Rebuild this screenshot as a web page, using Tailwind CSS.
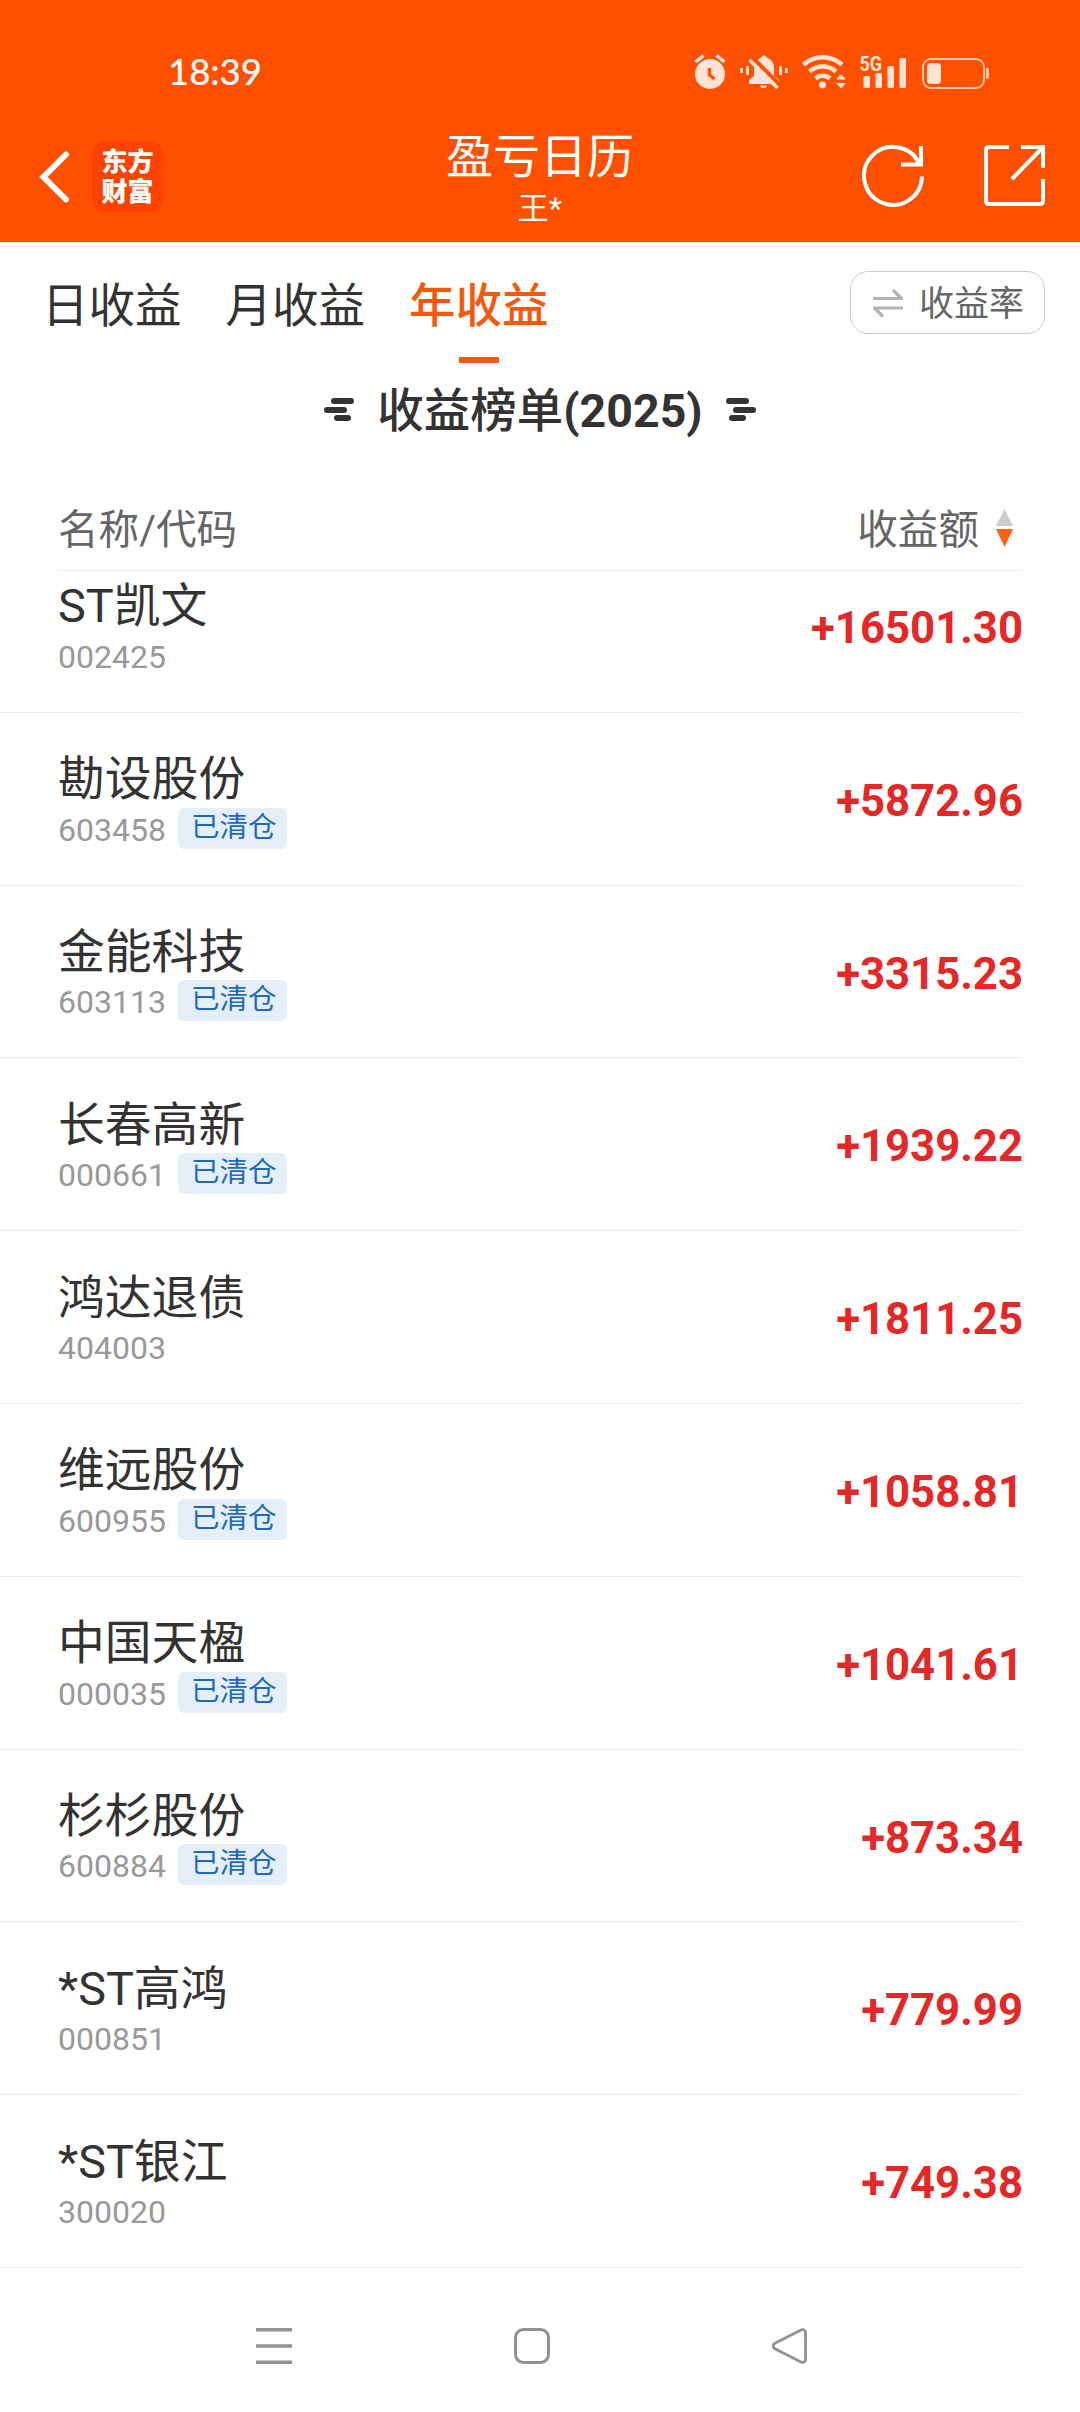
<!DOCTYPE html>
<html lang="zh-CN">
<head>
  <meta charset="UTF-8" />
  <meta name="viewport" content="width=device-width, initial-scale=1.0" />
  <title>盈亏日历</title>
  <script src="https://cdn.jsdelivr.net/npm/@tailwindcss/browser@4"></script>
  <style>
    body {
      font-family: Roboto, 'Noto Sans CJK SC', sans-serif;
    }
  </style>
</head>
<body class="bg-white text-[#333] w-[1080px] h-[2412px] overflow-hidden flex flex-col">

  <!-- Header -->
  <header class="bg-[#ff5000] text-white h-[242px] shrink-0">
    <!-- Status bar -->
    <div class="h-[130px] pl-[168px] pr-[90px] pt-[12px] flex items-center justify-between">
      <span class="text-[36.5px] leading-none font-medium font-['Lato']">18:39</span>
      <svg class="w-[296px] h-[52px]" viewBox="0 -9 296 52" fill="#ffe4d6">
        <!-- alarm -->
        <circle cx="16" cy="20" r="15" />
        <path d="M1.500 8l8-6.500M30.500 8l-8-6.500" stroke="#ffe4d6" stroke-width="3.500" />
        <path d="M15.500 14v7l5 4" stroke="#ff5000" stroke-width="3.500" fill="none" />
        <!-- muted bell -->
        <path d="M55 30v-4l5-4v-8c0-6 3-9 7.500-10.500 1-3 4-3 5 0C77 5 80 8 80 14v8l5 4v4z" />
        <path d="M66 31.500h7c-1 3.500-6 3.500-7 0z" />
        <path d="M58.500 3.500l30 30" stroke="#ff5000" stroke-width="4" />
        <path d="M55.500 6l28 28" stroke="#ffe4d6" stroke-width="3.500" />
        <path d="M47.500 14v5M53.500 12v9M86.500 12v9M92.500 14v5" stroke="#ffe4d6" stroke-width="2.800" />
        <!-- wifi -->
        <g fill="none" stroke="#ffe4d6" stroke-width="4.500">
          <path d="M109.500 10.500a29 29 0 0 1 38.500 0" />
          <path d="M115.500 17.500a20 20 0 0 1 26.500 0" />
          <path d="M121.500 24.500a11 11 0 0 1 14.500 0" />
        </g>
        <circle cx="128.500" cy="31" r="3.400" />
        <path d="M142 25.500l5-5.500 5 5.500zM142 29l5 5.500 5-5.500z" />
        <!-- signal -->
        <rect x="169.500" y="22" width="6.500" height="12" rx="1.500" />
        <rect x="181.500" y="19" width="6.500" height="15" rx="1.500" />
        <rect x="193.500" y="12" width="6.500" height="22" rx="1.500" />
        <rect x="205.500" y="4" width="6.500" height="30" rx="1.500" />
        <text x="165.500" y="16.500" font-family="Roboto" font-size="20" font-weight="700" textLength="22.500" lengthAdjust="spacingAndGlyphs">5G</text>
        <!-- battery -->
        <rect x="229" y="5" width="61" height="29" rx="8" fill="none" stroke="#ffc8a6" stroke-width="2" />
        <rect x="233" y="9" width="14" height="21" rx="4" />
        <path d="M292 14h1q2 0 2 2v7q0 2-2 2h-1z" fill="#ffc8a6" />
      </svg>
    </div>

    <!-- Title bar -->
    <div class="h-[112px] px-[34px] grid grid-cols-3">
      <div class="flex items-start pt-[11px]">
        <svg class="w-[40px] h-[71px]" viewBox="0 0 40 71" fill="none" stroke="#fff" stroke-width="6" stroke-linecap="round">
          <path d="M32 13.500L9.500 36 32 58.500" />
        </svg>
        <div class="ml-[18px] w-[71px] h-[71px] rounded-[14px] bg-[#ff4200] flex flex-col items-center justify-center text-[26px] leading-[30px] font-black">
          <span>东方</span>
          <span>财富</span>
        </div>
      </div>
      <div class="flex flex-col items-center">
        <h1 class="text-[47px] leading-[54px]">盈亏日历</h1>
        <p class="text-[31px] leading-[50px]">王*</p>
      </div>
      <div class="flex items-start justify-end gap-[59px] pt-[13px]">
        <svg class="w-[64px] h-[64px]" viewBox="0 0 64 64" fill="none" stroke="#fff" stroke-width="4">
          <path d="M61 33.500A29 29 0 1 1 58 20" />
          <path d="M60 3v18.500H40" />
        </svg>
        <svg class="w-[62px] h-[64px]" viewBox="0 0 62 64" fill="none" stroke="#fff" stroke-width="4">
          <path d="M25 4H5q-3 0-3 3v51q0 3 3 3h51q3 0 3-3V36" />
          <path d="M37 4h22v21M59 4L28 36" />
        </svg>
      </div>
    </div>
  </header>

  <!-- Tabs -->
  <nav class="h-[123px] shrink-0 pl-[42px] pr-[35px] flex items-start justify-between">
    <div class="flex gap-[44px] pt-[29px] text-[46.5px] leading-[70px]">
      <span>日收益</span>
      <span>月收益</span>
      <span class="flex flex-col items-center font-medium text-[#f4590c]">
        年收益
        <i class="mt-[16px] w-[40px] h-[6px] bg-[#f05a14]"></i>
      </span>
    </div>
    <button class="mt-[29px] w-[195px] h-[63px] rounded-[18px] border border-[#ccc] text-[#666] text-[35px] leading-none flex items-center pl-[22px]">
      <svg class="w-[30px] h-[28px] mr-[16px]" viewBox="0 0 30 28" fill="none" stroke="#b3b3b3" stroke-width="3.200" stroke-linecap="round" stroke-linejoin="round">
        <path d="M1.500 9.500h27l-7.500-7.500" />
        <path d="M28.500 19h-27l7.500 7.500" />
      </svg>
      <span class="pt-[3px]">收益率</span>
    </button>
  </nav>

  <!-- List title -->
  <h2 class="h-[91px] shrink-0 flex items-center justify-center text-[46.5px] leading-none font-medium">
    <svg class="w-[30px] h-[23px] mr-[23px] -mt-[3px]" viewBox="0 0 30 23" fill="#333">
      <rect x="7" width="23" height="6" rx="3" />
      <rect y="9" width="23" height="6" rx="3" />
      <rect x="10" y="17" width="17" height="6" rx="3" />
    </svg>
    <span class="pt-[2px]">收益榜单<b class="font-bold">(2025)</b></span>
    <svg class="w-[30px] h-[23px] ml-[23px] -mt-[3px]" viewBox="0 0 30 23" fill="#333">
      <rect width="23" height="6" rx="3" />
      <rect x="7" y="9" width="23" height="6" rx="3" />
      <rect x="3" y="17" width="17" height="6" rx="3" />
    </svg>
  </h2>

  <!-- Column names -->
  <div class="ml-[58px] mr-[58px] mt-[30px] h-[85px] shrink-0 border-b border-[#ebebeb] flex items-center justify-between text-[40.6px] leading-none text-[#666]">
    <span class="pt-[5px]">名称/代码</span>
    <span class="flex items-center pr-[9px]">
      <span class="pt-[5px]">收益额</span>
      <svg class="w-[17px] h-[38px] ml-[17px]" viewBox="0 0 17 38">
        <path d="M8.500 0L17 17H0z" fill="#ccc" />
        <path d="M8.500 38L17 20H0z" fill="#fa6414" />
      </svg>
    </span>
  </div>

  <!-- Stocks -->
  <ul id="stockList" class="-mt-[31px] shrink-0"></ul>

  <!-- System navigation -->
  <div class="h-[36px] mt-[60px] shrink-0 pl-[256px] pr-[272px] flex justify-between">
    <svg class="w-[36px] h-[36px]" viewBox="0 0 36 36" fill="#929292">
      <rect width="36" height="3.400" rx="0.500" />
      <rect y="16.300" width="36" height="3.400" rx="0.500" />
      <rect y="32.600" width="36" height="3.400" rx="0.500" />
    </svg>
    <svg class="w-[36px] h-[36px]" viewBox="0 0 36 36" fill="none" stroke="#929292" stroke-width="3">
      <rect x="1.500" y="1.500" width="33" height="33" rx="8" />
    </svg>
    <svg class="w-[36px] h-[36px]" viewBox="0 0 36 36" fill="none" stroke="#929292" stroke-width="2.800">
      <path d="M2.500 15.500L29 2q4-1.500 4.500 2.500v27q-.5 4-4.500 2.500L2.500 20.500q-2.500-2.500 0-5z" />
    </svg>
  </div>

  <!-- Script -->
  <script>
    const stocks = [
      { name: 'ST凯文', code: '002425', amount: '+16501.30', cleared: false },
      { name: '勘设股份', code: '603458', amount: '+5872.96', cleared: true },
      { name: '金能科技', code: '603113', amount: '+3315.23', cleared: true },
      { name: '长春高新', code: '000661', amount: '+1939.22', cleared: true },
      { name: '鸿达退债', code: '404003', amount: '+1811.25', cleared: false },
      { name: '维远股份', code: '600955', amount: '+1058.81', cleared: true },
      { name: '中国天楹', code: '000035', amount: '+1041.61', cleared: true },
      { name: '杉杉股份', code: '600884', amount: '+873.34', cleared: true },
      { name: '*ST高鸿', code: '000851', amount: '+779.99', cleared: false },
      { name: '*ST银江', code: '300020', amount: '+749.38', cleared: false }
    ];

    document.getElementById('stockList').innerHTML = stocks.map(stock => `
      <li class="h-[172.8px] mr-[58px] pl-[58px] pt-[6px] border-b border-[#ebebeb] flex items-center justify-between">
        <div>
          <p class="text-[46.8px] leading-[56px]">${stock.name}</p>
          <div class="flex items-center h-[45px]">
            <span class="text-[32px] leading-none text-[#999]">${stock.code}</span>
            ${stock.cleared ? '<span class="ml-[12px] -mt-[3px] w-[109px] h-[41px] pl-[13px] rounded-[6px] bg-[#e4effa] text-[#1e6ab8] text-[28.5px] leading-[40px]">已清仓</span>' : ''}
          </div>
        </div>
        <span class="-mr-px text-[43.7px] leading-none font-bold text-[#e42828]">${stock.amount}</span>
      </li>`).join('');
  </script>
</body>
</html>
